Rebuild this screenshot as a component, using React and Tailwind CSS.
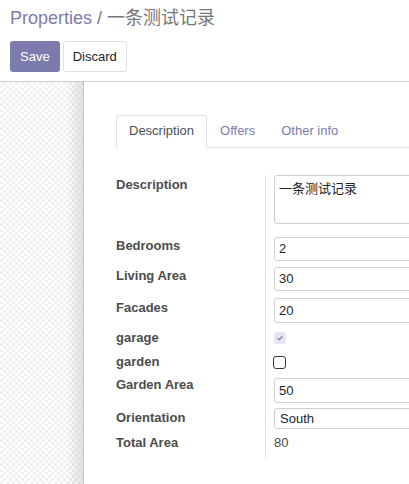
import React from "react";

const font = "font-['Liberation_Sans','Noto_Sans_CJK_SC',sans-serif]";

function Label({ children, off = 0 }) {
  return (
    <div
      className="text-[13px] leading-[20px] font-bold text-[#4c4c4c] whitespace-nowrap"
      style={off ? { marginTop: off } : undefined}
    >
      {children}
    </div>
  );
}

function Row({ h, label, labelOff = 0, children }) {
  return (
    <>
      <div style={{ height: h }}>
        <Label off={labelOff}>{label}</Label>
      </div>
      <div style={{ height: h }} className="border-l border-[#dcdcdc] pl-[8px]">
        {children}
      </div>
    </>
  );
}

function Input({ value, h = 24, mt = 1 }) {
  return (
    <div
      className="w-[300px] border border-[#cfcfcf] rounded-[3px] px-[4px] text-[13px] text-[#212529] flex items-center bg-white"
      style={{ height: h, marginTop: mt }}
    >
      {value}
    </div>
  );
}

export default function App() {
  return (
    <div className={`${font} w-[409px] h-[484px] overflow-hidden bg-white flex flex-col`}>
      {/* Control panel */}
      <div className="px-[10px] pt-[7px] h-[82px] border-b border-[#cccccc] shrink-0">
        <div className="text-[18px] leading-[22px] whitespace-nowrap">
          <span className="text-[#7c7bad]">Properties</span>
          <span className="text-[#777777]"> / 一条测试记录</span>
        </div>
        <div className="flex gap-[3px] mt-[12px]">
          <button className="h-[31px] px-[10px] rounded-[3px] bg-[#7c7bad] text-white text-[13px]">
            Save
          </button>
          <button className="h-[31px] px-[9px] rounded-[3px] bg-white border border-[#dee2e6] text-[#212529] text-[13px]">
            Discard
          </button>
        </div>
      </div>

      {/* Body */}
      <div className="flex flex-1 min-h-0">
        <div className="w-[83px] shrink-0 flex bg-[conic-gradient(#f1f1f1_25%,#ffffff_0_50%,#f1f1f1_0_75%,#ffffff_0)] bg-[length:6px_6px]">
          <div className="flex-1" />
          <div className="w-[18px] bg-[linear-gradient(to_right,rgba(0,0,0,0),rgba(0,0,0,0.1))]" />
        </div>
        <div className="flex-1 border-l border-[#c4c4c4] bg-white pt-[33px] pl-[32px] min-w-0">
          {/* Tabs */}
          <div className="flex border-b border-[#dee2e6] w-[400px] text-[13px] leading-[20px]">
            <div className="px-[12px] py-[5px] border border-[#dee2e6] border-b-white -mb-px rounded-t-[3px] text-[#495057] bg-white">
              Description
            </div>
            <div className="px-[12px] py-[5px] border border-transparent text-[#7c7bad]">Offers</div>
            <div className="px-[12px] py-[5px] border border-transparent text-[#7c7bad]">Other info</div>
          </div>

          {/* Group */}
          <div className="mt-[27px] grid grid-cols-[149px_1fr]">
            <Row h={61} label="Description">
              <div className="w-[300px] h-[49px] border border-[#cfcfcf] rounded-[3px] px-[4px] pt-[3px] text-[13px] leading-[20px] text-[#212529]">
                一条测试记录
              </div>
            </Row>
            <Row h={30} label="Bedrooms">
              <Input value="2" mt={1} />
            </Row>
            <Row h={31} label="Living Area">
              <Input value="30" mt={1} />
            </Row>
            <Row h={31} label="Facades" labelOff={1}>
              <Input value="20" mt={1} h={25} />
            </Row>
            <Row h={24} label="garage">
              <div className="mt-[4px] w-[12px] h-[12px] rounded-[2px] bg-[#e6e6f0] flex items-center justify-center">
                <svg width="8" height="8" viewBox="0 0 8 8">
                  <path d="M1.5 4.2 L3.2 5.8 L6.5 2.2" fill="none" stroke="#8a89b8" strokeWidth="1.3" />
                </svg>
              </div>
            </Row>
            <Row h={23} label="garden">
              <div className="mt-[4px] -ml-[1px] w-[13px] h-[13px] rounded-[3px] border-[1.5px] border-[#3a3a3a] bg-white" />
            </Row>
            <Row h={32} label="Garden Area">
              <Input value="50" mt={3} h={25} />
            </Row>
            <Row h={26} label="Orientation" labelOff={1}>
              <Input value={<span className="pl-[1px]">South</span>} mt={1} h={21} />
            </Row>
            <Row h={25} label="Total Area">
              <div className="text-[13px] leading-[20px] text-[#4c4c4c]">80</div>
            </Row>
          </div>
        </div>
      </div>
    </div>
  );
}
